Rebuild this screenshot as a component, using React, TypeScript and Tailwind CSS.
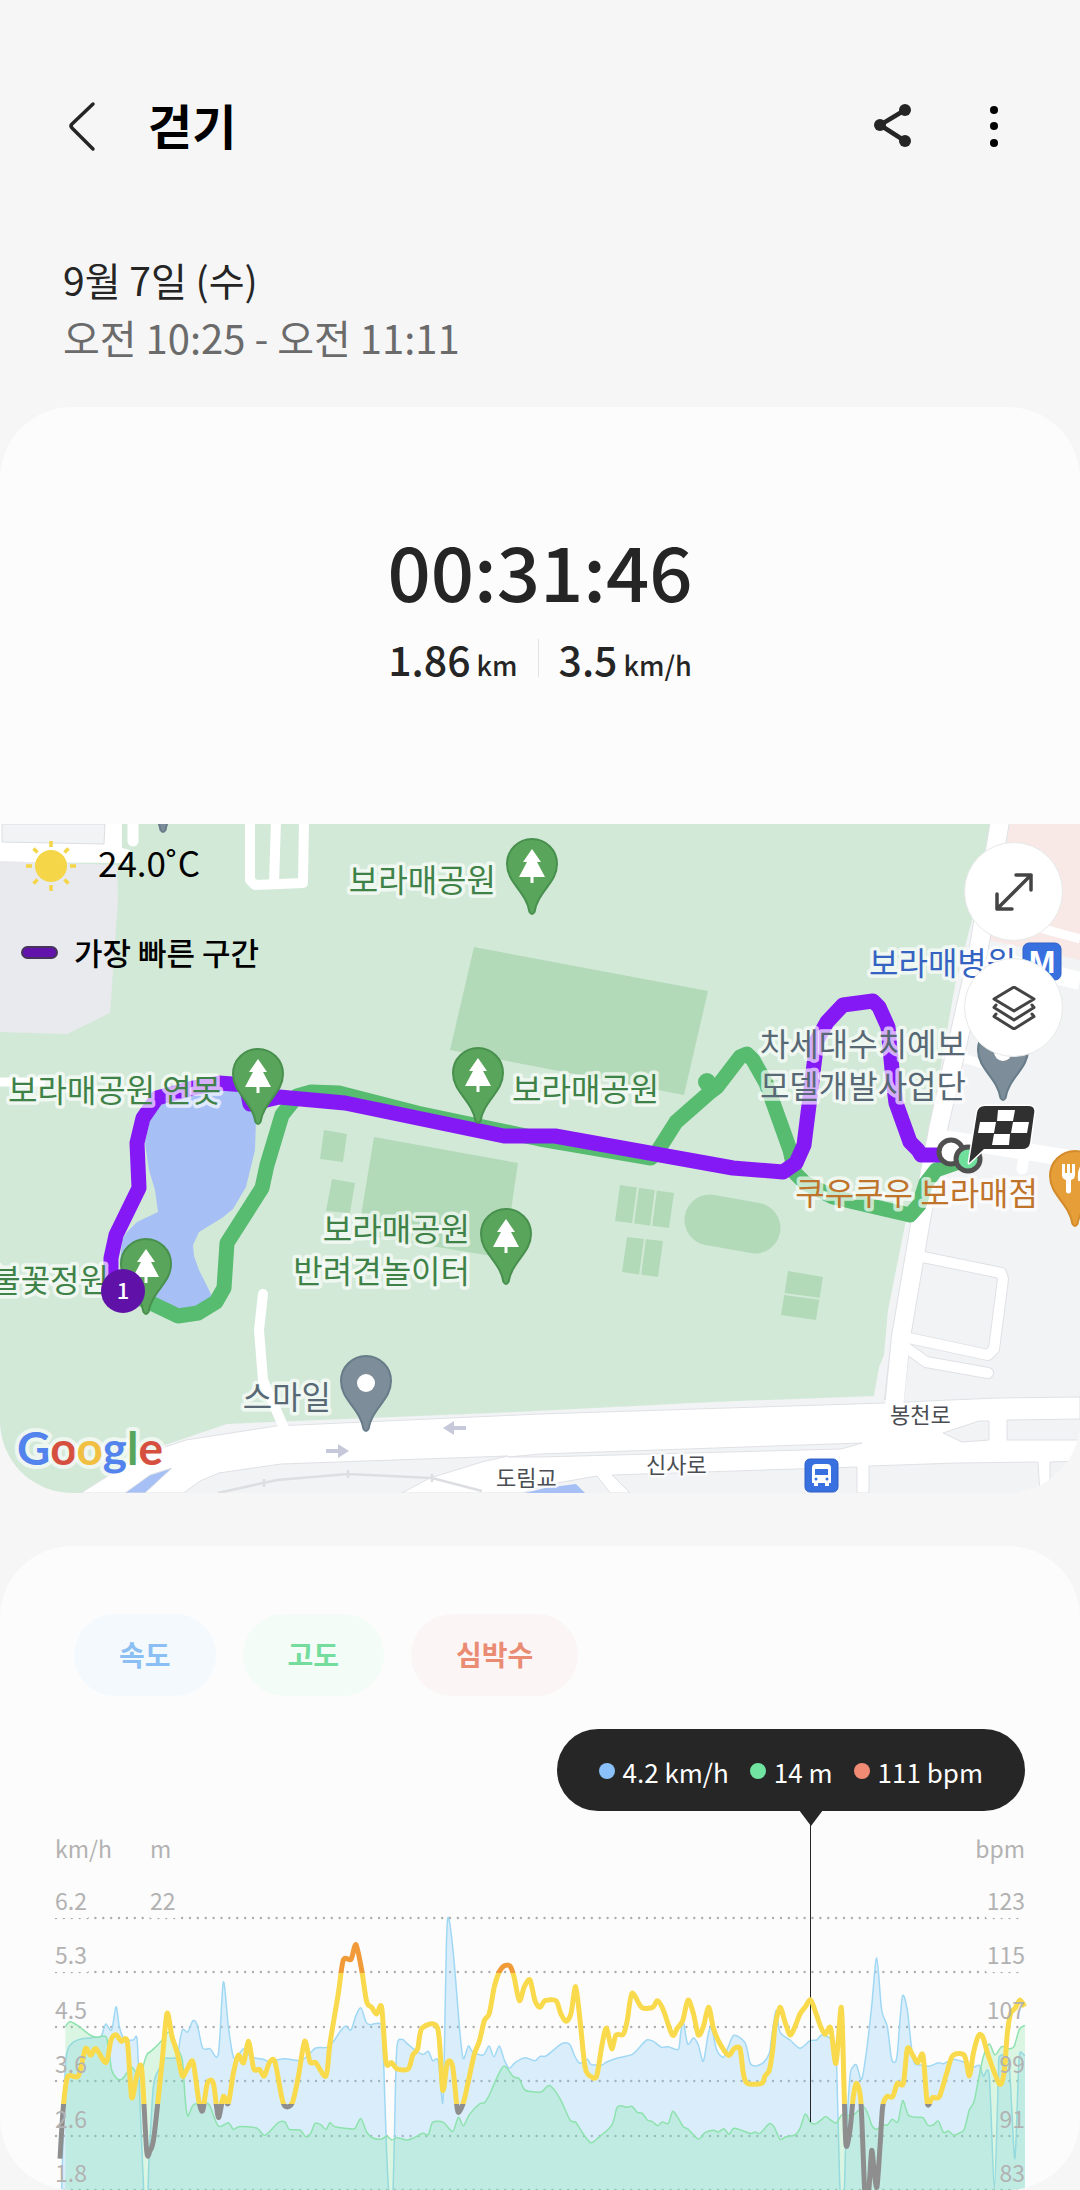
// App.tsx: workout detail screen (walking)
//
// Summary card with the route map, then the speed / elevation / heart rate chart.

import React from 'react';
import { clsx } from 'clsx';

type Point = [number, number];

// Chart samples are stored at three units per pixel, measured from the top of the chart.
const UNITS = 3;
const CHART_HEIGHT = 370;

const heartRate: Point[] = [
  [180, 1016], [190, 860], [203, 770], [235, 768], [256, 686], [272, 706], [288, 686], [318, 728],
  [333, 660], [348, 644], [364, 664], [382, 666], [395, 832], [410, 770], [425, 746], [440, 992],
  [450, 992], [462, 950], [486, 728], [501, 580], [516, 650], [532, 700], [547, 768], [562, 746],
  [579, 726], [596, 840], [608, 872], [622, 790], [640, 790], [655, 892], [670, 830], [685, 850],
  [700, 760], [715, 706], [731, 728], [746, 664], [761, 746], [778, 748], [793, 768], [808, 728],
  [825, 726], [850, 850], [876, 850], [895, 770], [914, 664], [930, 726], [947, 728], [978, 768],
  [990, 670], [1015, 520], [1030, 420], [1053, 418], [1068, 374], [1085, 450], [1100, 545],
  [1115, 562], [1130, 582], [1145, 562], [1158, 726], [1175, 728], [1192, 747], [1225, 747],
  [1238, 706], [1253, 686], [1266, 625], [1313, 625], [1328, 810], [1342, 728], [1358, 740],
  [1372, 868], [1382, 868], [1395, 830], [1422, 706], [1438, 664], [1453, 602], [1468, 580],
  [1483, 500], [1498, 455], [1512, 438], [1530, 438], [1542, 470], [1558, 542], [1573, 500],
  [1590, 480], [1605, 542], [1620, 562], [1635, 542], [1668, 542], [1682, 580], [1698, 604],
  [1713, 580], [1727, 500], [1740, 600], [1755, 740], [1770, 768], [1790, 768], [1805, 680],
  [1819, 624], [1835, 686], [1848, 645], [1870, 643], [1882, 600], [1896, 520], [1925, 562],
  [1958, 562], [1972, 542], [1990, 570], [2017, 645], [2032, 624], [2048, 602], [2064, 540],
  [2080, 580], [2095, 645], [2110, 620], [2126, 562], [2140, 624], [2158, 668], [2186, 706],
  [2202, 686], [2220, 686], [2230, 760], [2242, 790], [2285, 790], [2295, 768], [2308, 750],
  [2318, 690], [2325, 620], [2340, 562], [2355, 606], [2370, 645], [2385, 620], [2400, 582],
  [2416, 560], [2432, 540], [2448, 580], [2462, 620], [2476, 643], [2492, 624], [2508, 730],
  [2524, 562], [2532, 800], [2538, 975], [2550, 930], [2560, 830], [2570, 790], [2583, 850],
  [2595, 1130], [2605, 1130], [2615, 992], [2623, 1060], [2631, 1100], [2640, 980], [2648, 860],
  [2660, 830], [2678, 830], [2692, 790], [2710, 790], [2722, 686], [2738, 705], [2753, 728],
  [2769, 706], [2782, 850], [2798, 832], [2818, 830], [2840, 760], [2858, 707], [2893, 706],
  [2908, 768], [2920, 700], [2935, 648], [2948, 650], [2966, 710], [2998, 792], [3012, 760],
  [3022, 640], [3032, 580], [3045, 565], [3060, 540], [3074, 560],
];

const speed: Point[] = [
  [185, 1110], [195, 760], [203, 690], [218, 668], [245, 656], [300, 650], [310, 630], [318, 612],
  [335, 630], [348, 560], [358, 620], [368, 650], [380, 660], [400, 660], [411, 657], [418, 800],
  [428, 1040], [433, 1130], [443, 1130], [447, 1020], [460, 800], [478, 745], [495, 715],
  [530, 712], [540, 660], [548, 628], [563, 636], [579, 602], [592, 616], [608, 684], [630, 686],
  [655, 702], [670, 486], [685, 620], [700, 710], [715, 705], [731, 686], [748, 706], [765, 714],
  [790, 718], [810, 726], [830, 720], [855, 716], [900, 722], [925, 705], [947, 684], [980, 682],
  [1000, 665], [1020, 635], [1037, 618], [1053, 630], [1068, 586], [1083, 564], [1098, 606],
  [1110, 614], [1145, 615], [1150, 700], [1160, 1000], [1168, 1130], [1178, 1130], [1183, 960],
  [1190, 690], [1205, 658], [1225, 674], [1250, 694], [1270, 703], [1285, 694], [1298, 722],
  [1315, 724], [1328, 850], [1333, 700], [1339, 380], [1345, 292], [1360, 400], [1380, 640],
  [1390, 716], [1405, 678], [1418, 696], [1450, 705], [1467, 678], [1482, 710], [1498, 678],
  [1513, 720], [1528, 745], [1545, 728], [1575, 713], [1605, 722], [1620, 709], [1638, 708],
  [1670, 682], [1690, 669], [1710, 674], [1725, 710], [1740, 730], [1762, 718], [1773, 733],
  [1805, 735], [1820, 726], [1850, 715], [1895, 704], [1915, 686], [1940, 660], [1960, 664],
  [1985, 682], [2005, 680], [2035, 688], [2042, 640], [2050, 606], [2063, 672], [2080, 654],
  [2095, 675], [2110, 724], [2125, 640], [2135, 625], [2150, 690], [2170, 712], [2185, 680],
  [2202, 646], [2235, 668], [2250, 728], [2265, 738], [2290, 728], [2308, 700], [2315, 650],
  [2328, 572], [2340, 636], [2370, 660], [2400, 685], [2430, 662], [2450, 660], [2465, 645],
  [2490, 655], [2505, 680], [2510, 740], [2518, 1050], [2522, 1130], [2532, 1130], [2537, 980],
  [2550, 770], [2560, 740], [2570, 736], [2585, 778], [2600, 690], [2615, 560], [2630, 414],
  [2645, 570], [2662, 620], [2675, 718], [2690, 715], [2700, 600], [2708, 526], [2722, 570],
  [2740, 720], [2765, 735], [2790, 738], [2815, 728], [2830, 731], [2858, 718], [2885, 724],
  [2900, 732], [2920, 742], [2938, 736], [2950, 768], [2968, 770], [2983, 1105], [2995, 770],
  [2998, 710], [3025, 720], [3035, 860], [3045, 1015], [3055, 760], [3060, 698], [3075, 708],
];

const elevation: Point[] = [
  [196, 620], [210, 605], [235, 618], [270, 645], [290, 652], [318, 650], [328, 700], [335, 750],
  [350, 775], [365, 778], [380, 760], [395, 742], [410, 758], [425, 750], [440, 705], [455, 692],
  [485, 662], [500, 640], [516, 640], [532, 685], [547, 720], [555, 830], [563, 888], [580, 855],
  [610, 850], [628, 855], [655, 918], [685, 908], [700, 928], [718, 920], [770, 924], [795, 946],
  [835, 908], [855, 906], [868, 928], [900, 930], [917, 950], [932, 940], [945, 910], [962, 914],
  [978, 928], [990, 908], [1005, 920], [1060, 927], [1068, 920], [1083, 896], [1100, 936],
  [1118, 954], [1145, 957], [1160, 948], [1175, 960], [1190, 953], [1220, 960], [1240, 954],
  [1268, 940], [1285, 944], [1298, 907], [1330, 907], [1358, 934], [1375, 892], [1390, 917],
  [1408, 884], [1438, 852], [1453, 848], [1468, 825], [1490, 775], [1512, 738], [1540, 770],
  [1558, 776], [1575, 810], [1622, 816], [1638, 802], [1652, 798], [1680, 836], [1710, 900],
  [1727, 907], [1750, 942], [1772, 968], [1790, 957], [1835, 916], [1850, 865], [1862, 857],
  [1880, 862], [1896, 859], [1912, 877], [1927, 880], [1942, 900], [1957, 905], [1973, 917],
  [1987, 906], [2005, 910], [2018, 874], [2035, 895], [2050, 920], [2065, 928], [2095, 957],
  [2115, 938], [2140, 931], [2155, 936], [2172, 926], [2187, 943], [2203, 925], [2250, 940],
  [2265, 936], [2280, 940], [2308, 911], [2322, 920], [2340, 958], [2358, 950], [2385, 945],
  [2400, 925], [2416, 882], [2432, 908], [2450, 910], [2476, 890], [2492, 900], [2508, 909],
  [2525, 885], [2540, 885], [2560, 885], [2590, 860], [2605, 885], [2615, 915], [2630, 928],
  [2648, 915], [2662, 915], [2677, 898], [2694, 905], [2708, 842], [2725, 885], [2750, 892],
  [2769, 893], [2783, 915], [2800, 915], [2815, 903], [2830, 937], [2845, 933], [2862, 946],
  [2880, 938], [2893, 928], [2908, 870], [2922, 845], [2935, 780], [2950, 710], [2968, 672],
  [2985, 705], [3005, 680], [3025, 686], [3042, 680], [3058, 628], [3075, 616],
];

function linePath(points: Point[]): string {
  const p = points.map(([x, y]) => [x / UNITS, y / UNITS]);
  const t = 0.14;
  let d = `M${p[0][0]} ${p[0][1]}`;
  for (let i = 1; i < p.length; i++) {
    const before = p[Math.max(i - 2, 0)];
    const a = p[i - 1];
    const b = p[i];
    const after = p[Math.min(i + 1, p.length - 1)];
    d += `C${a[0] + (b[0] - before[0]) * t} ${a[1] + (b[1] - before[1]) * t} `;
    d += `${b[0] - (after[0] - a[0]) * t} ${b[1] - (after[1] - a[1]) * t} ${b[0]} ${b[1]}`;
  }
  return d;
}

function areaPath(points: Point[]): string {
  const first = points[0][0] / UNITS;
  const last = points[points.length - 1][0] / UNITS;
  return `${linePath(points)}L${last} ${CHART_HEIGHT}L${first} ${CHART_HEIGHT}Z`;
}

const gridRows = [
  { y: 98, speed: '6.2', bpm: '123' },
  { y: 152, speed: '5.3', bpm: '115' },
  { y: 207, speed: '4.5', bpm: '107' },
  { y: 261, speed: '3.6', bpm: '99' },
  { y: 316, speed: '2.6', bpm: '91' },
  { y: 370, speed: '1.8', bpm: '83' },
];

const metrics = [
  { label: '속도', className: 'bg-[#f4f9fd] text-[#8bbff3]' },
  { label: '고도', className: 'bg-[#f3fcf7] text-[#74dd9e]' },
  { label: '심박수', className: 'bg-[#fcf5f5] text-[#ea8b73]' },
];

const readings = [
  { text: '4.2 km/h', dot: 'bg-[#8bc1fa]' },
  { text: '14 m', dot: 'bg-[#70e4a0]' },
  { text: '111 bpm', dot: 'bg-[#f18b74]' },
];

interface PinProps {
  x: number;
  y: number;
  kind: 'park' | 'place' | 'food';
}

const pinColors = {
  park: { fill: '#5aa55c', stroke: '#48904d' },
  place: { fill: '#7d8d9a', stroke: '#677c89' },
  food: { fill: '#e69e38', stroke: '#d38b2b' },
};

// x is the centre of the pin, y its top edge
const Pin: React.FC<PinProps> = ({ x, y, kind }) => (
  <g transform={`translate(${x} ${y})`}>
    <path
      d="M0 1A25 25 0 0 1 25 26C25 45 6 53 2.5 74Q0 78 -2.5 74C-6 53 -25 45 -25 26A25 25 0 0 1 0 1Z"
      fill={pinColors[kind].fill}
      stroke={pinColors[kind].stroke}
      strokeWidth="2"
    />
    {kind === 'park' && (
      <path d="M0 11L9 24H5L13 39H1.5V45H-1.5V39H-13L-5 24H-9Z" fill="#fff" />
    )}
    {kind === 'place' && <circle cy="28" r="9" fill="#fff" />}
    {kind === 'food' && (
      <>
        <path d="M-13 14V25Q-13 29 -9 30V42Q-6.5 45 -4 42V30Q0 29 0 25V14" fill="#fff" />
        <path d="M-9 12V23M-4 12V23" stroke="#e69e38" strokeWidth="2" />
        <path d="M10 43V14Q4 18 5 29H10" fill="none" stroke="#fff" strokeWidth="4" />
      </>
    )}
  </g>
);

interface MapLabelProps {
  x: number;
  y: number;
  color: string;
  end?: boolean;
  small?: boolean;
  children: string;
}

const MapLabel: React.FC<MapLabelProps> = ({ x, y, color, end, small, children }) => (
  <text
    x={x}
    y={y}
    fill={color}
    stroke="#fff"
    strokeOpacity="0.68"
    strokeWidth={small ? 5 : 7}
    strokeLinejoin="round"
    paintOrder="stroke"
    textAnchor={end ? 'end' : 'start'}
    className={small ? 'text-[22px]' : 'text-[32px]'}
  >
    {children}
  </text>
);

const PARK = '#3f8248';
const PLACE = '#586975';
const ROAD_NAME = '#4a4d52';

const RouteMap: React.FC = () => (
  <svg viewBox="0 824 1080 669" className="block h-auto w-full" role="img" aria-label="이동 경로">
    <rect y="824" width="1080" height="669" fill="#f1f3f5" />

    {/* Park */}
    <path
      d="M0 824H992L988 847 972 920 955 985 923 1170 905 1225 888 1310 884 1355 879 1367 874 1396 712 1402 516 1412 344 1419 227 1424 165 1445 83 1493H0Z"
      fill="#d3e9d8"
    />
    <path d="M0 824H122V848L130 850 128 863 0 862Z" fill="#fff" />
    <path d="M2 824H105L104 844 2 842Z" fill="#f1f3f5" stroke="#dcdfe2" />
    <path d="M0 861L117 865 118 900 110 1013 67 1034 0 1032Z" fill="#e9eaee" />
    <path d="M1010 824H1080V960L988 940Z" fill="#f8e9e7" />

    <g fill="#b2dab9">
      <path d="M474 947L708 991 684 1095 450 1050Z" />
      <path d="M324 1130L347 1134 343 1162 320 1159Z" />
      <path d="M332 1179L355 1183 350 1213 326 1211Z" />
      <path d="M374 1137L518 1163 504 1258 358 1234Z" />
      <path d="M620 1185L674 1193 669 1228 615 1221Z" />
      <path d="M627 1237L663 1241 658 1277 622 1272Z" />
      <path d="M788 1271L823 1277 816 1320 781 1315Z" />
    </g>
    <path d="M638 1187L633 1224M656 1189L651 1227M645 1238L640 1276M784 1294L821 1299" stroke="#d3e9d8" strokeWidth="2" />
    <path d="M710 1220L755 1228" stroke="#b2dab9" strokeWidth="51" strokeLinecap="round" />

    {/* Pond */}
    <path
      d="M145 1143L150 1120 165 1100 190 1088 250 1085 256 1120 255 1150 246 1187 233 1209 222 1218 199 1232 193 1245 194 1256 199 1270 212 1296 200 1312 178 1314 140 1298 120 1262 122 1240 127 1232 137 1222 158 1212 155 1190 149 1170Z"
      fill="#a6bff5"
    />

    {/* Main road and the blocks south of it */}
    <path
      d="M81 1493L130 1462 165 1447 186 1440 276 1426 540 1414 885 1403 950 1400 998 1398 1080 1397V1493Z"
      fill="#fff"
      stroke="#dfe1e5"
    />
    <g fill="#f1f3f5" stroke="#dfe1e5">
      <path d="M182 1494L200 1481 219 1473 281 1464 508 1456 482 1462 430 1478 400 1494Z" />
      <path d="M508 1457L540 1454 862 1443 841 1449 540 1457Z" />
      <path d="M612 1475L857 1467V1494H631Z" />
      <path d="M597 1476L611 1494H520L545 1485Z" />
      <path d="M869 1466L957 1463 1038 1462 1040 1494H869Z" />
      <path d="M1050 1462L1081 1461V1494H1050Z" />
      <path d="M943 1433L979 1421H989V1440L962 1442Z" />
      <path d="M1007 1420L1081 1419V1440H1007Z" />
    </g>
    <path d="M125 1493L150 1475 172 1468 145 1493Z" fill="#a6bff5" stroke="#dfe1e5" />
    <path d="M525 1493L545 1488 576 1484 585 1493Z" fill="#a6bff5" />
    <path d="M218 1493L277 1480 348 1474 432 1478 482 1491M264 1479V1487M348 1470V1478M432 1474V1482" fill="none" stroke="#dcdee2" strokeWidth="2.5" />
    <g fill="#c6c9da">
      <path d="M326 1449H338V1444L349 1451 338 1458V1453H326Z" />
      <path d="M466 1426H454V1421L443 1428 454 1435V1430H466Z" />
    </g>

    {/* Side streets */}
    <g fill="none" stroke="#fff" strokeLinejoin="round">
      <path d="M250 820V880L255 885 303 883 304 820M276 820L274 885" strokeWidth="10" />
      <path d="M133 815V841" strokeWidth="11" strokeLinecap="round" />
      <path d="M0 1082H45" strokeWidth="9" />
      <path d="M263 1294L259 1330 263 1380 284 1428" strokeWidth="10" strokeLinecap="round" />
      <path d="M985 913L1080 939" strokeWidth="9" />
      <path d="M975 955L1080 981" strokeWidth="18" />
      <path d="M955 1056L990 1066" strokeWidth="9" />
      <path d="M940 1138L1080 1160" strokeWidth="17" />
      <path d="M1024 1155L1022 1169" strokeWidth="11" strokeLinecap="round" />
    </g>
    <g fill="none" strokeLinejoin="round">
      <path d="M918 1256L1001 1273 1003 1279 994 1349 988 1355 904 1337M904 1346L926 1362 988 1373" stroke="#dfe1e5" strokeWidth="12" strokeLinecap="round" />
      <path d="M1001 815L978 953 939 1125 920 1225 901 1337 894 1401" stroke="#dfe1e5" strokeWidth="20" />
      <path d="M1001 815L978 953 939 1125 920 1225 901 1337 894 1408" stroke="#fff" strokeWidth="18" />
      <path d="M918 1256L1001 1273 1003 1279 994 1349 988 1355 904 1337M904 1346L926 1362 988 1373" stroke="#fff" strokeWidth="10" strokeLinecap="round" />
      <path d="M940 1138L960 1141" stroke="#fff" strokeWidth="16" />
    </g>

    {/* Route, then the fastest section on top */}
    <path
      d="M968 1159L936 1170 926 1183 919 1205 910 1215 884 1209 833 1197 805 1183 795 1173 790 1150 766 1083 753 1060 747 1054 740 1057 717 1087 709 1093 676 1122 657 1152 651 1158 540 1139 417 1113 339 1093 311 1092 297 1096 282 1115 267 1165 262 1188 227 1243 224 1288 216 1302 198 1313 178 1316 151 1303 130 1294"
      fill="none"
      stroke="#57bb70"
      strokeWidth="15"
      strokeLinejoin="round"
    />
    <circle cx="707" cy="1082" r="9" fill="#57bb70" />
    <path
      d="M950 1155H921L918 1150 910 1142 896 1103 893 1080 888 1027 879 1007 873 1001 843 1005 827 1022 817 1040 810 1097 804 1145 796 1163 783 1172 733 1168 555 1136H504L345 1103 279 1097 250 1104 246 1085 219 1083 193 1088 157 1098 143 1118 137 1143 139 1188 116 1235 111 1258V1280"
      fill="none"
      stroke="#8519f5"
      strokeWidth="15"
      strokeLinejoin="round"
    />

    <Pin x={532} y={838} kind="park" />
    <Pin x={258} y={1048} kind="park" />
    <Pin x={478} y={1047} kind="park" />
    <Pin x={506} y={1208} kind="park" />
    <Pin x={146} y={1238} kind="park" />
    <Pin x={366} y={1355} kind="place" />
    <Pin x={1003} y={1024} kind="place" />
    <Pin x={163} y={756} kind="place" />
    <Pin x={1075} y={1150} kind="food" />

    <MapLabel x={496} y={892} color={PARK} end>보라매공원</MapLabel>
    <MapLabel x={8} y={1102} color={PARK}>보라매공원 연못</MapLabel>
    <MapLabel x={512} y={1101} color={PARK}>보라매공원</MapLabel>
    <MapLabel x={470} y={1241} color={PARK} end>보라매공원</MapLabel>
    <MapLabel x={470} y={1283} color={PARK} end>반려견놀이터</MapLabel>
    <MapLabel x={109} y={1292} color={PARK} end>불꽃정원</MapLabel>
    <MapLabel x={331} y={1409} color={PLACE} end>스마일</MapLabel>
    <MapLabel x={966} y={1056} color={PLACE} end>차세대수치예보</MapLabel>
    <MapLabel x={966} y={1098} color={PLACE} end>모델개발사업단</MapLabel>
    <MapLabel x={869} y={975} color="#3463c2">보라매병원</MapLabel>
    <MapLabel x={1038} y={1205} color="#bf742c" end>쿠우쿠우 보라매점</MapLabel>
    <MapLabel x={496} y={1486} color={ROAD_NAME} small>도림교</MapLabel>
    <MapLabel x={646} y={1473} color={ROAD_NAME} small>신사로</MapLabel>
    <MapLabel x={890} y={1423} color={ROAD_NAME} small>봉천로</MapLabel>

    {/* Metro and bus stops */}
    <rect x="1023" y="943" width="38" height="37" rx="6" fill="#3871df" stroke="#2f61c6" />
    <text x="1042" y="973" fill="#fff" textAnchor="middle" className="font-['Liberation_Sans'] text-[32px] font-bold">M</text>
    <rect x="805" y="1459" width="33" height="33" rx="5" fill="#3871df" stroke="#2f61c6" />
    <path d="M812 1468Q812 1464 816 1464H827Q831 1464 831 1468V1483H829V1486H825V1483H818V1486H814V1483H812Z" fill="#fff" />
    <path d="M815 1469H828V1475H815Z" fill="#3871df" />
    <circle cx="816" cy="1479" r="1.5" fill="#3871df" />
    <circle cx="827" cy="1479" r="1.5" fill="#3871df" />

    {/* Start, finish and lap markers */}
    <circle cx="951" cy="1152" r="12" fill="#fff" stroke="#505050" strokeWidth="5" />
    <circle cx="968" cy="1159" r="12" fill="#6fe09b" stroke="#505050" strokeWidth="5" />
    <path
      d="M985 1106H1028Q1036 1106 1034 1114L1030 1143Q1029 1149 1022 1149H984L969 1163 977 1113Q978 1106 985 1106Z"
      fill="#303030"
      stroke="#fff"
      strokeWidth="3"
      strokeLinejoin="round"
      paintOrder="stroke"
    />
    <path
      d="M998 1110H1015L1013 1121H997ZM980 1122H996L994 1133H978ZM1013 1122H1029L1027 1133H1011ZM994 1134H1010L1009 1145H992Z"
      fill="#fff"
    />
    <circle cx="123" cy="1291" r="22" fill="#6012a8" />
    <text x="123" y="1299" fill="#fff" textAnchor="middle" className="text-[22px] font-medium">1</text>

    <text
      x="17"
      y="1465"
      stroke="#fff"
      strokeOpacity="0.6"
      strokeWidth="8"
      strokeLinejoin="round"
      paintOrder="stroke"
      className="font-[Lato,sans-serif] text-[46px] font-bold"
    >
      <tspan fill="#5383ec">G</tspan>
      <tspan fill="#d65040">o</tspan>
      <tspan fill="#f1bf42">o</tspan>
      <tspan fill="#5383ec">g</tspan>
      <tspan fill="#58a55c">l</tspan>
      <tspan fill="#d65040">e</tspan>
    </text>
  </svg>
);

const SunIcon: React.FC = () => (
  <svg viewBox="0 0 52 52" className="size-[52px]" aria-hidden="true">
    <circle cx="26" cy="26" r="16" fill="#f4d648" />
    <path
      d="M26 1V7M26 45V51M1 26H7M45 26H51M8.5 8.5L12.5 12.5M39.5 39.5L43.5 43.5M8.5 43.5L12.5 39.5M39.5 12.5L43.5 8.5"
      stroke="#f4d648"
      strokeWidth="3.5"
    />
  </svg>
);

const WorkoutChart: React.FC = () => (
  <svg viewBox={`0 0 1080 ${CHART_HEIGHT}`} className="block h-auto w-full text-[23px]" role="img" aria-label="속도, 고도, 심박수 그래프">
    <defs>
      {/* Heart rate zones: high, moderate, below range */}
      <linearGradient id="zones" gradientUnits="userSpaceOnUse" x1="0" y1="0" x2="0" y2={CHART_HEIGHT}>
        <stop offset={153 / CHART_HEIGHT} stopColor="#f09a38" />
        <stop offset={153 / CHART_HEIGHT} stopColor="#f9da4c" />
        <stop offset={284 / CHART_HEIGHT} stopColor="#f9da4c" />
        <stop offset={284 / CHART_HEIGHT} stopColor="#8e8e8e" />
      </linearGradient>
    </defs>

    {gridRows.map(row => (
      <line key={row.y} x1="56" x2="1025" y1={row.y} y2={row.y} stroke="#adadad" strokeWidth="2.4" strokeLinecap="round" strokeDasharray="0 7.88" />
    ))}
    {/* The labels' plates hide the upper half of the dots */}
    <path d="M54 68H88V98H54ZM150 68H176V98H150ZM986 68H1026V98H986ZM54 122H88V152H54ZM986 122H1026V152H986Z" fill="#fcfcfc" />

    <path d={areaPath(speed)} fill="#7fc8f5" fillOpacity="0.28" />
    <path d={linePath(speed)} fill="none" stroke="#a0d8f4" strokeWidth="1.5" />
    <path d={areaPath(elevation)} fill="#71e294" fillOpacity="0.23" />
    <path d={linePath(elevation)} fill="none" stroke="#8ee2ae" strokeWidth="1.5" />
    <line x1="810.5" x2="810.5" y1="0" y2="302" stroke="#262626" />
    <path d={linePath(heartRate)} fill="none" stroke="url(#zones)" strokeWidth="5" strokeLinejoin="round" />

    <g fill="#b2b2b2">
      <text x="55" y="38">km/h</text>
      <text x="150" y="38">m</text>
      <text x="150" y="90">22</text>
      <text x="1025" y="38" textAnchor="end">bpm</text>
      {gridRows.map(row => (
        <React.Fragment key={row.y}>
          <text x="55" y={row.y - 8}>{row.speed}</text>
          <text x="1025" y={row.y - 8} textAnchor="end">{row.bpm}</text>
        </React.Fragment>
      ))}
    </g>
  </svg>
);

const App: React.FC = () => (
  <div className="min-h-screen bg-[#f6f6f6] font-['Noto_Sans_CJK_KR',sans-serif] text-[#252525]">
    {/* Header */}
    <header className="flex h-[186px] items-center pt-[66px] pr-[60px] pl-[56px]">
      <button type="button" aria-label="뒤로" className="flex size-[52px] items-center justify-center">
        <svg viewBox="0 0 52 52" className="size-[52px]" fill="none" stroke="#252525" strokeWidth="3.5" strokeLinecap="round" strokeLinejoin="round">
          <path d="M37 4L16 24Q14 26 16 28L37 49" />
        </svg>
      </button>
      <h1 className="ml-10 flex-1 pb-1 text-[48px] leading-[60px] font-bold text-black">걷기</h1>
      <button type="button" aria-label="공유" className="flex size-[52px] items-center justify-center">
        <svg viewBox="0 0 52 52" className="size-[52px]" fill="#252525" stroke="#252525">
          <path d="M39 10L14 25 39 41" fill="none" strokeWidth="4.5" />
          <circle cx="39" cy="10" r="6" stroke="none" />
          <circle cx="14" cy="25" r="6" stroke="none" />
          <circle cx="39" cy="41" r="6" stroke="none" />
        </svg>
      </button>
      <button type="button" aria-label="더보기" className="ml-[50px] flex size-[52px] items-center justify-center">
        <svg viewBox="0 0 52 52" className="size-[52px]" fill="#000">
          <circle cx="26" cy="10" r="4" />
          <circle cx="26" cy="26" r="4" />
          <circle cx="26" cy="43" r="4" />
        </svg>
      </button>
    </header>

    <div className="px-[63px] pt-16 pb-[41px] leading-[58px]">
      <p className="text-[39px]">9월 7일 (수)</p>
      <p className="text-[40px] text-[#6b6b6b]">오전 10:25 - 오전 11:11</p>
    </div>

    <main className="flex flex-col gap-[53px]">
      <section className="overflow-hidden rounded-[72px] bg-[#fcfcfc] pt-[117px]">
        <p className="text-center text-[76px] leading-[90px] font-medium">00:31:46</p>
        <div className="mt-3.5 flex h-[60px] items-center justify-center font-medium">
          <p className="flex items-baseline gap-1.5 text-[41px] leading-[60px]">
            1.86<span className="text-[27px] leading-none">km</span>
          </p>
          <span className="mx-5 h-[38px] w-px bg-[#e2e2e2]" />
          <p className="flex items-baseline gap-1.5 text-[41px] leading-[60px]">
            3.5<span className="text-[27px] leading-none">km/h</span>
          </p>
        </div>

        <div className="relative mt-[136px]">
          <RouteMap />
          <div className="absolute top-3 left-[25px] flex items-center gap-[21px] text-[35px] leading-[52px] text-black">
            <SunIcon />
            <span className="pb-2">24.0˚C</span>
          </div>
          <div className="absolute top-[104px] left-[21px] flex items-center gap-4 text-[31px] leading-[48px] font-medium text-black">
            <span className="h-[13px] w-[37px] rounded-full border-2 border-[#46345a] bg-[#6213ab]" />
            가장 빠른 구간
          </div>
          <div className="absolute top-[18px] right-[17px] flex flex-col gap-[17px]">
            <button type="button" aria-label="지도 확대" className="flex size-[99px] items-center justify-center rounded-full border border-[#e6e9e8] bg-white">
              <svg viewBox="0 0 40 40" className="size-10" fill="none" stroke="#444" strokeWidth="3.5" strokeLinecap="round" strokeLinejoin="round">
                <path d="M3 37L37 3M22 3H37V18M3 22V37H18" />
              </svg>
            </button>
            <button type="button" aria-label="지도 유형" className="flex size-[99px] items-center justify-center rounded-full border border-[#e6e9e8] bg-white">
              <svg viewBox="0 0 44 44" className="size-11" fill="none" stroke="#444" strokeWidth="3" strokeLinecap="round" strokeLinejoin="round">
                <path d="M22 1L42 13 22 25 2 13ZM4 19L2 21.5 22 34 42 21.5 40 19M4 28L2 30.5 22 43 42 30.5 40 28" />
              </svg>
            </button>
          </div>
        </div>
      </section>

      <section className="overflow-hidden rounded-[72px] bg-[#fcfcfc] pt-[68px]">
        <div className="flex gap-[27px] px-[74px]">
          {metrics.map(metric => (
            <button
              key={metric.label}
              type="button"
              className={clsx('h-[82px] rounded-full px-[45px] pb-0.5 text-[28px] font-bold', metric.className)}
            >
              {metric.label}
            </button>
          ))}
        </div>

        <div className="mt-[33px] mb-[9px] flex justify-end pr-[55px]">
          <div className="relative flex h-[82px] items-center gap-[21px] rounded-full bg-[#262626] px-[42px] pt-0.5 text-[26px] text-white">
            {readings.map(reading => (
              <span key={reading.text} className="flex items-center gap-2">
                <span className={clsx('size-4 rounded-full', reading.dot)} />
                {reading.text}
              </span>
            ))}
            <svg viewBox="0 0 24 16" className="absolute top-[81px] right-[202px] h-4 w-6" fill="#262626" aria-hidden="true">
              <path d="M0 0H24L12 16Z" />
            </svg>
          </div>
        </div>

        <WorkoutChart />
      </section>
    </main>
  </div>
);

export default App;
